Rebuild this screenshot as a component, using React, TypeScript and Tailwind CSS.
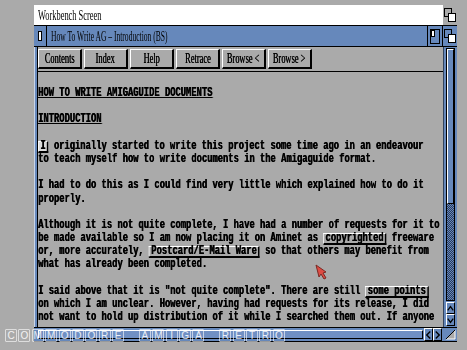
import React from 'react';

type Seg = string | { link: string; active?: boolean };

interface Line {
  segs: Seg[];
  heading?: boolean;
}

const lines: Line[] = [
  { segs: ['HOW TO WRITE AMIGAGUIDE DOCUMENTS'], heading: true },
  { segs: [] },
  { segs: ['INTRODUCTION'], heading: true },
  { segs: [] },
  { segs: [{ link: 'I', active: true }, ' originally started to write this project some time ago in an endeavour'] },
  { segs: ['to teach myself how to write documents in the Amigaguide format.'] },
  { segs: [] },
  { segs: ['I had to do this as I could find very little which explained how to do it'] },
  { segs: ['properly.'] },
  { segs: [] },
  { segs: ['Although it is not quite complete, I have had a number of requests for it to'] },
  { segs: ['be made available so I am now placing it on Aminet as ', { link: 'copyrighted' }, ' freeware'] },
  { segs: ['or, more accurately, ', { link: 'Postcard/E-Mail Ware' }, ' so that others may benefit from'] },
  { segs: ['what has already been completed.'] },
  { segs: [] },
  { segs: ['I said above that it is "not quite complete". There are still ', { link: 'some points' }] },
  { segs: ['on which I am unclear. However, having had requests for its release, I did'] },
  { segs: ['not want to hold up distribution of it while I searched them out. If anyone'] },
];

const buttons = ['Contents', 'Index', 'Help', 'Retrace', 'Browse <', 'Browse >'];

const watermark = 'COMMODORE AMIGA RETRO'.split('');

function DepthIcon() {
  return (
    <svg width="12" height="14" viewBox="0 0 12 14">
      <rect x="0.5" y="0.5" width="7" height="8" fill="none" stroke="#000" />
      <rect x="4.5" y="5.5" width="7" height="8" fill="#fff" stroke="#000" />
    </svg>
  );
}

function ZoomIcon() {
  return (
    <svg width="10" height="15" viewBox="0 0 10 15">
      <rect x="0.5" y="0.5" width="9" height="14" fill="none" stroke="#000" />
      <rect x="1.5" y="1.5" width="3" height="6" fill="#fff" stroke="#000" />
    </svg>
  );
}

function Chevron({ dir }: { dir: 'up' | 'down' | 'left' | 'right' }) {
  const d = {
    up: 'M1 7 L4.5 2 L8 7',
    down: 'M1 2 L4.5 7 L8 2',
    left: 'M6 1 L2 5 L6 9',
    right: 'M2 1 L6 5 L2 9',
  }[dir];
  const vert = dir === 'up' || dir === 'down';
  return (
    <svg width={vert ? 9 : 8} height={vert ? 9 : 10} viewBox={vert ? '0 0 9 9' : '0 0 8 10'}>
      <path d={d} fill="none" stroke="#000" strokeWidth="1.6" />
    </svg>
  );
}

function GuideLine({ line }: { line: Line }) {
  return (
    <div className={`h-[13.2px] leading-[13.2px] whitespace-pre ${line.heading ? 'underline underline-offset-[1px]' : ''}`}>
      {line.segs.map((s, i) =>
        typeof s === 'string' ? (
          <span key={i}>{s}</span>
        ) : (
          <span
            key={i}
            className={`inline-block leading-[9px] px-[2px] border-t border-l-[1.4px] border-r-[2.7px] border-b-2 border-t-white border-l-white border-r-black border-b-black ${
              s.active ? 'bg-[#dcdcdc]' : ''
            }`}
          >
            {s.link}
          </span>
        )
      )}
    </div>
  );
}

export default function App() {
  return (
    <div className="relative w-[467px] h-[350px] overflow-hidden bg-[#aaaaaa] pt-[5px] pl-[34px] font-['Liberation_Serif',serif] text-black">
      {/* screen title bar */}
      <div className="flex w-[423px] h-[21px] border-b border-black">
        <div className="w-[409px] bg-white pl-[4px] flex items-center text-[14px]">
          <span className="inline-block origin-left scale-x-[0.6] whitespace-nowrap">Workbench Screen</span>
        </div>
        <div className="w-[14px] flex items-center justify-center">
          <DepthIcon />
        </div>
      </div>

      {/* window */}
      <div className="w-[423px] h-[316px] flex flex-col border-b border-black">
        <div className="h-[21px] flex bg-[#6688bb] border-b border-black">
          <div className="w-[13px] border-r border-black flex items-center justify-center">
            <div className="w-[4px] h-[10px] bg-white border border-black" />
          </div>
          <div className="flex-1 pl-[4px] flex items-center text-[14px] overflow-hidden">
            <span className="inline-block origin-left scale-x-[0.54] whitespace-nowrap">
              How To Write AG – Introduction (BS)
            </span>
          </div>
          <div className="w-[15px] border-l border-black flex items-center justify-center">
            <ZoomIcon />
          </div>
          <div className="w-[15px] border-l border-black flex items-center justify-center">
            <DepthIcon />
          </div>
        </div>

        <div className="flex-1 flex min-h-0">
          <div className="w-[4px] bg-[#6688bb] border-l border-[#c8d4e8] border-r border-r-black" />
          <div className="flex-1 flex flex-col overflow-hidden">
            <div className="mt-[2px] h-[20px] flex gap-[2px]">
              {buttons.map(b => (
                <div
                  key={b}
                  className="w-[44px] h-[20px] flex items-center justify-center border-t border-l border-t-white border-l-white border-r-2 border-b-2 border-r-black border-b-black text-[15px]"
                >
                  <span className="inline-block whitespace-nowrap scale-x-[0.56] [text-shadow:0.4px_0_0_#000]">{b}</span>
                </div>
              ))}
            </div>
            <div className="mt-[2px] h-[1px] bg-black" />
            <div className="mt-[15px] w-[560px] origin-top-left scale-x-[0.7333] font-['Liberation_Mono',monospace] font-bold text-[12px] [text-shadow:0.6px_0_0_#000]">
              {lines.map((l, i) => (
                <GuideLine key={i} line={l} />
              ))}
            </div>
          </div>
          <div className="w-[14px] bg-[#6688bb] flex flex-col px-[2px] pt-[1px] border-l border-[#33445e]">
            <div className="h-[253px] flex flex-col border border-black">
              <div className="h-[155px] bg-[#6688bb] border-t border-l border-white border-r border-b border-r-black border-b-black" />
              <div className="flex-1 bg-[repeating-conic-gradient(#6688bb_0_25%,#2a3a5c_0_50%)] bg-[length:2px_2px]" />
            </div>
            <div className="mt-[1px] h-[12px] flex items-center justify-center border-t border-l border-white border-r border-b border-r-black border-b-black">
              <Chevron dir="up" />
            </div>
            <div className="h-[12px] flex items-center justify-center border-t border-l border-white border-r border-b border-r-black border-b-black">
              <Chevron dir="down" />
            </div>
          </div>
        </div>

        <div className="h-[14px] flex bg-[#6688bb] border-t border-black">
          <div className="w-[4px]" />
          <div className="w-[385px] py-[2px]">
            <div className="h-full bg-[#7090c4] border-t border-l border-white border-r border-b border-r-black border-b-black" />
          </div>
          <div className="w-[1px]" />
          <div className="w-[9px] flex items-center justify-center border-t border-l border-white border-r border-b border-r-black border-b-black">
            <Chevron dir="left" />
          </div>
          <div className="w-[9px] flex items-center justify-center border-t border-l border-white border-r border-b border-r-black border-b-black">
            <Chevron dir="right" />
          </div>
          <div className="w-[1px]" />
          <div className="w-[14px] flex items-end justify-end p-[1px]">
            <svg width="11" height="11" viewBox="0 0 11 11">
              <path d="M1 10 L10 1 L10 10 Z" fill="#aaaaaa" stroke="#fff" strokeWidth="1" />
              <path d="M1 10 L10 1" stroke="#000" strokeWidth="1" />
            </svg>
          </div>
        </div>
      </div>

      {/* mouse pointer */}
      <svg className="absolute left-[315px] top-[264px]" width="12" height="17" viewBox="0 0 12 17">
        <path d="M1 1 L4 13 L6 10 L9 15 L11 14 L8 9 L11 8 Z" fill="#dd4c44" stroke="#7a2a24" strokeWidth="1" />
      </svg>

      {/* watermark */}
      <div className="absolute left-[5px] top-[329px] flex font-['Liberation_Sans',sans-serif]">
        {watermark.map((c, i) => (
          <div key={i} className="w-[13.4px] flex justify-start">
            {c !== ' ' && (
              <div className="w-[12px] h-[13px] rounded-[1px] border border-white/60 text-white/85 text-[10px] leading-none flex items-center justify-center">
                {c}
              </div>
            )}
          </div>
        ))}
      </div>
    </div>
  );
}
